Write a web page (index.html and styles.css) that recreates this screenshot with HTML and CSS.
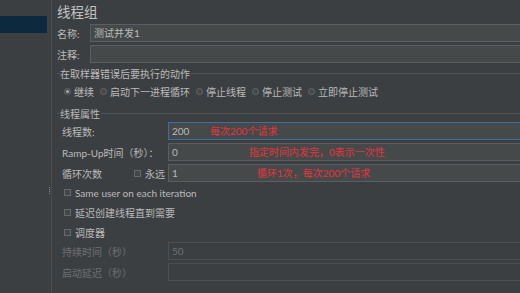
FILE: index.html
```html
<!DOCTYPE html>
<html lang="zh">

<head>
    <meta charset="UTF-8">
    <title>线程组</title>
    <link rel="stylesheet" href="styles.css">
</head>

<body>
    <div class="app">
        <div class="tree">
            <div class="tree-sel"></div>
        </div>
        <div class="splitter"><span class="grip"></span></div>

        <div class="main">
            <div class="title">线程组</div>

            <div class="row">
                <label class="lbl-short">名称:</label>
                <div class="field">测试并发1</div>
            </div>
            <div class="row">
                <label class="lbl-short">注释:</label>
                <div class="field"></div>
            </div>

            <div class="legend legend-first"><span>在取样器错误后要执行的动作</span></div>
            <div class="radios">
                <span class="radio on"></span>继续
                <span class="radio"></span>启动下一进程循环
                <span class="radio"></span>停止线程
                <span class="radio"></span>停止测试
                <span class="radio"></span>立即停止测试
            </div>

            <div class="legend legend-second"><span>线程属性</span></div>
            <div class="props">
                <div class="row">
                    <label class="lbl">线程数:</label>
                    <div class="field focus">200<span class="note note-1">每次200个请求</span></div>
                </div>
                <div class="row">
                    <label class="lbl">Ramp-Up时间（秒）：</label>
                    <div class="field">0<span class="note note-2">指定时间内发完，0表示一次性</span></div>
                </div>
                <div class="row row-last">
                    <label class="lbl">循环次数<span class="forever"><span class="check"></span>永远</span></label>
                    <div class="field">1<span class="note note-3">循环1次，每次200个请求</span></div>
                </div>

                <div class="check-row check-first"><span class="check"></span>Same user on each iteration</div>
                <div class="check-row"><span class="check"></span>延迟创建线程直到需要</div>
                <div class="check-row"><span class="check"></span>调度器</div>

                <div class="row">
                    <label class="lbl off">持续时间（秒）</label>
                    <div class="field off">50</div>
                </div>
                <div class="row">
                    <label class="lbl off">启动延迟（秒）</label>
                    <div class="field off"></div>
                </div>
            </div>
        </div>
    </div>
</body>

</html>
```

FILE: styles.css
```css
html, body {
    margin: 0;
    height: 100%;
    overflow: hidden;
    background-color: #3c3f41;
}

body {
    font-family: Lato, "Noto Sans CJK SC", sans-serif;
    font-size: 10px;
    color: #bbbbbb;
}

.app {
    display: flex;
    height: 293px;
}

/* left tree */
.tree {
    width: 47px;
    flex-shrink: 0;
    padding-top: 16px;
}

.tree-sel {
    height: 17px;
    background-color: #0d293e;
}

.splitter {
    width: 4px;
    flex-shrink: 0;
    border-right: 1px solid #4a4d4f;
    position: relative;
}

.grip {
    position: absolute;
    left: 2px;
    top: 187px;
    width: 1px;
    height: 7px;
    background: repeating-linear-gradient(#8c8f91 0 1px, transparent 1px 2px);
}

/* right panel */
.main {
    flex: 1;
    padding: 3px 0 0 5px;
    margin-right: -12px;
}

.title {
    font-size: 13.5px;
    line-height: 19px;
    margin-bottom: 2px;
    color: #c2c2c2;
}

.row {
    display: flex;
    align-items: center;
    height: 18px;
    margin-bottom: 3px;
}

.row-last {
    margin-bottom: 0;
}

.lbl-short {
    width: 33px;
    flex-shrink: 0;
}

.lbl {
    width: 106px;
    flex-shrink: 0;
    display: flex;
    align-items: center;
    white-space: nowrap;
}

.field {
    flex: 1;
    height: 16px;
    line-height: 16px;
    padding-left: 3px;
    background-color: #45494a;
    border: 1px solid #5b5e60;
    position: relative;
    color: #bbbbbb;
}

.field.focus {
    border-color: #3f6e9e;
}

.field.off {
    background-color: #3c3f41;
    border-color: #4d5052;
    color: #6d7072;
}

.lbl.off {
    color: #6d7072;
}

.note {
    position: absolute;
    top: 0;
    color: #e5343c;
    white-space: nowrap;
}

.note-1 { left: 41px; }
.note-2 { left: 80px; }
.note-3 { left: 88px; }

/* titled borders */
.legend {
    display: flex;
    align-items: center;
    height: 14px;
}

.legend::before {
    content: "";
    width: 3px;
    border-top: 1px solid #525557;
}

.legend::after {
    content: "";
    flex: 1;
    border-top: 1px solid #525557;
}

.legend span {
    padding: 0 1px 0 0;
}

.legend-first {
    margin-top: 2px;
}

.legend-second {
    margin-top: 8px;
    margin-bottom: 2px;
}

.radios {
    display: flex;
    align-items: center;
    height: 14px;
    margin-top: 4px;
    padding-left: 7px;
    white-space: nowrap;
}

.radio {
    width: 5px;
    height: 5px;
    border: 1px solid #66696b;
    border-radius: 50%;
    background-color: #43474a;
    margin: 0 3px 0 6px;
    box-sizing: content-box;
    position: relative;
}

.radio:first-child {
    margin-left: 0;
}

.radio.on::after {
    content: "";
    position: absolute;
    left: 1px;
    top: 1px;
    width: 3px;
    height: 3px;
    border-radius: 50%;
    background-color: #a9acae;
}

.props {
    padding-left: 5px;
}

.check {
    width: 5px;
    height: 5px;
    border: 1px solid #66696b;
    background-color: #43474a;
    margin-right: 4px;
    flex-shrink: 0;
}

.forever {
    display: flex;
    align-items: center;
    margin-left: auto;
    margin-right: 3px;
}

.check-row {
    display: flex;
    align-items: center;
    height: 20px;
    padding-left: 2px;
}

.check-first {
    margin-top: 1px;
    height: 19px;
}
```
